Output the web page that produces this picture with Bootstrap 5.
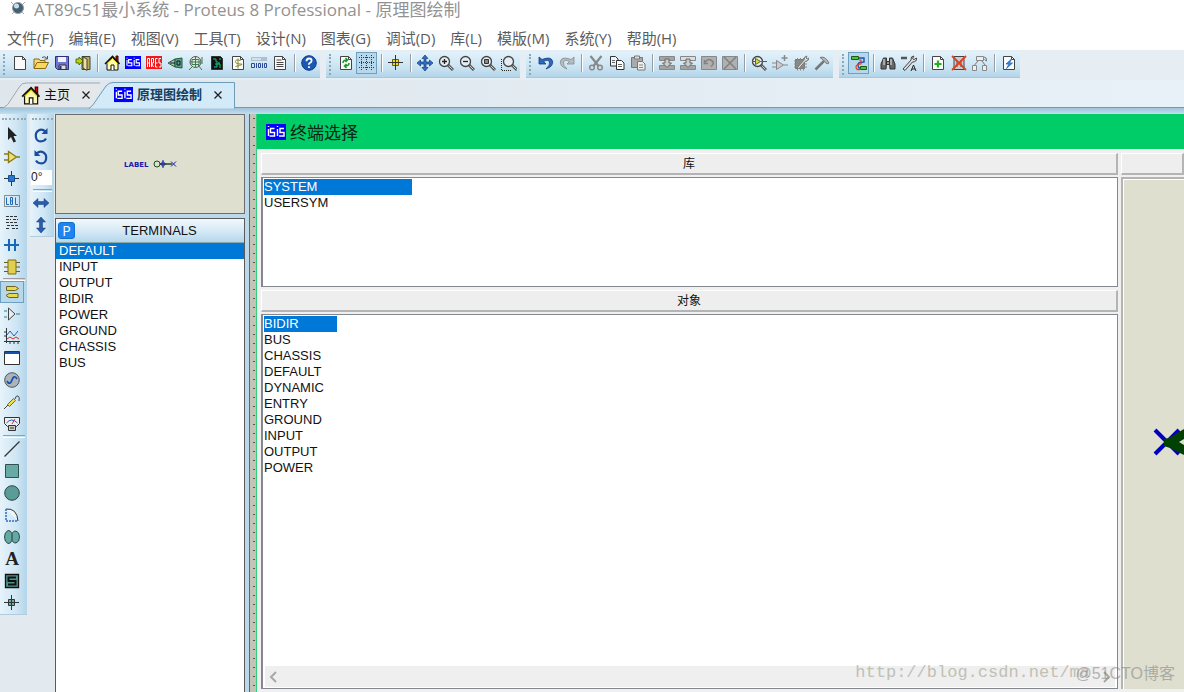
<!DOCTYPE html>
<html lang="zh-CN">
<head>
<meta charset="utf-8">
<meta name="viewport" content="width=device-width, initial-scale=1">
<title>AT89c51最小系统 - Proteus 8 Professional - 原理图绘制</title>
<link href="https://cdn.jsdelivr.net/npm/bootstrap@5.3.0/dist/css/bootstrap.min.css" rel="stylesheet">
<script src="https://cdn.jsdelivr.net/npm/bootstrap@5.3.0/dist/js/bootstrap.bundle.min.js"></script>
<style>
  body { font-family: "Liberation Sans", "Noto Sans CJK SC", sans-serif; font-size: 13px; line-height: 16px; color: #111; background: #e2eaf0; }
  .titlebar { height: 22px; padding: 0 10px; gap: 8px; background: #fff; color: #929292; font: 17px/20px "Open Sans", "Noto Sans CJK SC", sans-serif; }
  .titlebar h1 { font: inherit; margin: 0; }
  .menubar { height: 28px; padding: 2px 7px 0; gap: 15px; background: #fff; font: 15px/28px "Open Sans", "Noto Sans CJK SC", sans-serif; }
  .menubar a { color: #5c5c5c; text-decoration: none; }
  .toolrow { height: 30px; gap: 6px; padding-top: 2px; background: #e6eef4; }
  .toolgroup { height: 26px; padding: 0 1px 0 9px; position: relative; background: linear-gradient(#e2f2fb, #cbe4f3 60%, #b2d5e9); border-bottom: 1px solid #a5c8dc; }
  .toolgroup::before { content: ""; position: absolute; left: 3px; top: 2px; bottom: 2px; border-left: 2px dotted #8fa6b4; }
  button { border: 0; padding: 0; background: none; color: inherit; }
  .tool { width: 21px; height: 22px; display: flex; align-items: center; justify-content: center; flex: none; }
  .tool svg, .glyph { width: 16px; height: 16px; display: block; flex: none; fill: none; stroke: #333; }
  .pressed { background: #b7d7ea; border: 1px solid #6e9fc0; }
  .sep-v { width: 8px; height: 18px; margin-top: 2px; border-left: 1px solid #9a9da0; margin-left: 4px; margin-right: -4px; box-shadow: inset 1px 0 #fff; }
  .sep-h { height: 3px; margin: 0 2px 0 3px; border-top: 1px solid #9a9da0; border-bottom: 1px solid #fff; }
  .letter { font: bold 19px/20px "Liberation Serif", serif; color: #222; }
  .tabrow { height: 28px; background: linear-gradient(90deg, #dfe7ed, #e8f0f8); border-bottom: 1px solid #6d9bb8; }
  .doctab { position: relative; height: 28px; padding-top: 2px; gap: 4px; }
  .doctab > .shape { position: absolute; top: 0; left: 0; height: 28px; z-index: 0; }
  .doctab > span, .doctab > button, .doctab > .glyph { position: relative; z-index: 1; }
  .doctab > .glyph { width: 19px; height: 19px; }
  .tab-home { width: 100px; padding-left: 21px; }
  .tab-doc { width: 135px; padding-left: 14px; color: #15405f; font-weight: 700; }
  .closer { width: 16px; height: 16px; margin-left: 4px; }
  .closer svg { width: 8px; height: 8px; display: block; margin: auto; stroke: #222; stroke-width: 1.3; fill: none; }
  .band { height: 6px; background: linear-gradient(#9fc3d8, #c1dff0); flex: none; }
  .workarea { min-height: 0; background: #e2eaf0; }
  .side { background: linear-gradient(90deg, #e6f3fb, #cfe6f4 60%, #b3d5ea); align-self: flex-start; padding-top: 10px; position: relative; border-bottom: 1px solid #b0cddd; }
  .side::before { content: ""; position: absolute; top: 4px; left: 2px; right: 1px; border-top: 2px dotted #93a9b6; }
  .side-modes .tool { width: 24px; }
  .side-modes { width: 27px; }
  .side-orient { width: 24px; margin-left: 3px; }
  .angle { width: 21px; height: 15px; margin: 2px 0 4px 1px; border: 0; padding: 0; background: #fff; font-size: 12px; line-height: 15px; color: #222; display: block; }
  .selector { width: 190px; margin-left: 1px; background: #bcd9eb; }
  .overview { height: 100px; background: #dfdfd0; border: 1px solid #6d6d6d; margin-bottom: 4px; }
  .picker { border: 1px solid #5a5a5a; border-bottom: 0; background: #fff; }
  .picker-head { height: 24px; background: linear-gradient(#f0f8fd, #d7eaf6 50%, #b5d7ec); border-bottom: 1px solid #8aa; }
  .pbtn { width: 17px; height: 17px; margin-left: 2px; border-radius: 3px; background: #1e84ef; border: 1px solid #1470d0; color: #fff; font: 14px/15px "Open Sans", sans-serif; }
  .items { list-style: none; margin: 0; padding: 0; }
  .items li { height: 16px; white-space: nowrap; cursor: default; }
  .items .picked { background: #0078d7; color: #fff; }
  .picker li { padding-left: 3px; }
  .ruler { width: 12px; background: linear-gradient(90deg, #bcd9eb 4px, #666 4px, #666 5px, #c5c3b5 5px, #c5c3b5 11px, #2fd080 11px); position: relative; }
  .ruler::after { content: ""; position: absolute; right: 2px; top: 4px; bottom: 0; width: 2px; background: repeating-linear-gradient(#555 0 1px, transparent 1px 9px); }
  .dialog-pane { background: #f0f0f0; min-width: 0; }
  .dialog-head { height: 35px; padding-left: 9px; gap: 4px; background: #00cd68; font: 17px/35px "Noto Sans CJK SC", sans-serif; color: #0b2415; flex: none; }
  .dialog-head .glyph { width: 20px; height: 16px; }
  .panes { padding: 4px 0 3px 4px; gap: 3px; min-height: 0; }
  .colhead { height: 22px; background: #eee; border: 1px solid #fff; border-right: 2px solid #b4b4b4; border-bottom: 2px solid #b4b4b4; text-align: center; line-height: 21px; flex: none; font-size: 12px; }
  .listbox { background: #fff; border: 1px solid #828790; border-left-width: 2px; padding-top: 1px; min-height: 0; }
  .listbox .items { padding-left: 1px; }
  .lib-box { height: 110px; margin: 2px 0 3px; flex: none; }
  .obj-box { margin-top: 2px; }
  .lib-box .picked { width: 148px; }
  .obj-box .picked { width: 73px; }
  .hscroll { height: 21px; background: #efefef; padding: 0 3px; margin: 0 2px 1px; }
  .hscroll svg { width: 10px; height: 12px; stroke: #a8a8a8; stroke-width: 2; fill: none; }
  .view-pane { width: 63px; flex: none; overflow: hidden; }
  .canvas-view { background: #dfdfd0; border: 2px solid #b4b4b4; border-right: 0; border-bottom: 0; box-shadow: inset 1px 1px #fff; margin-top: 2px; }
  .canvas-view svg { width: 52px; height: 30px; flex: none; margin-left: 29px; margin-top: 15px; }
  .watermark { position: absolute; right: 9px; bottom: 7px; color: #777; opacity: .5; font: 16px/22px "Liberation Sans", "Noto Sans CJK SC", sans-serif; pointer-events: none; }
  .watermark-url { right: 94px; bottom: 8px; color: #9a9a88; opacity: .55; font: 17px/22px "Liberation Mono", monospace; }
</style>
</head>
<body class="vh-100 d-flex flex-column overflow-hidden position-relative">

<!-- shared glyphs -->
<svg width="0" height="0" class="position-absolute" aria-hidden="true">
  <symbol id="house" viewBox="0 0 16 16"><path d="M12 5V1h2v6z" fill="#c00" stroke="#400"/><path d="M3 8v7h11V8L8.500 2.500z" fill="#fff8b0" stroke="#111"/><path d="M1 9l7.500-7.500L15.500 9" stroke="#111" stroke-width="1.600"/><path d="M3 8.500L8.500 3.500 13.500 8.500" stroke="#e0d000"/><path d="M7 15v-5h3v5" fill="#fff" stroke="#111"/></symbol>
  <symbol id="isis" viewBox="0 0 20 16" preserveAspectRatio="none"><path d="M0 0h20v16H0z" fill="#00f" stroke="none"/><path d="M2.500 2v1M2.500 5v7M8.500 4.500h-4v4h4V12h-5M11.500 2v1M11.500 5v7M18 4.500h-4v4h4V12h-5" stroke="#fff" stroke-width="1.400"/></symbol>
  <symbol id="page" viewBox="0 0 16 16"><path d="M2.500 1.500h8l3 3v10h-11z" fill="#fafafa" stroke="#444"/><path d="M10.500 1.500v3h3" stroke="#444"/></symbol>
  <symbol id="lens" viewBox="0 0 16 16"><path d="M10 10l5 5" stroke="#555" stroke-width="3"/><path d="M10.500 10.500l4 4" stroke="#ccc" stroke-width="1"/><circle cx="6.500" cy="6.500" r="5" fill="#e4edf2" stroke="#444" stroke-width="1.300"/></symbol>
  <symbol id="cross" viewBox="0 0 8 8"><path d="M.5.5l7 7M7.500.5l-7 7"/></symbol>
</svg>

<header>
  <div class="titlebar d-flex">
    <svg class="glyph" viewBox="0 0 16 16"><path d="M1 2l3 3M15 2l-3 3M2 14l2-2M14 14l-2-2" stroke="#aaa"/><circle cx="8" cy="8" r="5.500" fill="#456074" stroke="#8ea0ad"/><circle cx="6.500" cy="6" r="2.500" fill="#c9dce8" stroke="none"/></svg>
    <h1>AT89c51最小系统 - Proteus 8 Professional - 原理图绘制</h1>
  </div>
  <nav class="menubar d-flex" aria-label="主菜单">
    <a href="#">文件(F)</a><a href="#">编辑(E)</a><a href="#">视图(V)</a><a href="#">工具(T)</a><a href="#">设计(N)</a><a href="#">图表(G)</a><a href="#">调试(D)</a><a href="#">库(L)</a><a href="#">模版(M)</a><a href="#">系统(Y)</a><a href="#">帮助(H)</a>
  </nav>
  <div class="toolrow d-flex">
    <div class="toolgroup d-flex" role="toolbar" aria-label="文件">
      <button class="tool" aria-label="新建"><svg><use href="#page"/></svg></button>
      <button class="tool" aria-label="打开"><svg viewBox="0 0 16 16"><path d="M1 13V4h5l1 1.500h5V8" fill="#f6dc78" stroke="#8a6a10"/><path d="M1 13.500L4 7.500h11.500l-3 6z" fill="#f8d860" stroke="#8a6a10"/><path d="M9 2.500q3-2 5 1M14.500 1v3h-3" stroke="#555"/></svg></button>
      <button class="tool" aria-label="保存"><svg viewBox="0 0 16 16"><path d="M1.500 1.500h13v13h-11l-2-2z" fill="#7076cf" stroke="#2c3078"/><path d="M4 2h8v5H4z" fill="#f2f2fb" stroke="none"/><path d="M5 10h7v4.500H5z" fill="#ddd" stroke="#333"/><path d="M6.500 11v3" stroke="#2c3078" stroke-width="2"/></svg></button>
      <button class="tool" aria-label="关闭工程"><svg viewBox="0 0 16 16"><path d="M7 1.500h8v13H7z" fill="#bba95a" stroke="#443"/><path d="M8 2l4 2v11.500l-4-2.500z" fill="#eee2a0" stroke="#443"/><path d="M1 4h3V2l4 4-4 4V8H1z" fill="#b7d600" stroke="#3f5800" stroke-width=".8"/></svg></button>
      <span class="sep-v"></span>
      <button class="tool" aria-label="主页"><svg><use href="#house"/></svg></button>
      <button class="tool" aria-label="ISIS"><svg viewBox="0 0 16 16"><use href="#isis" y="1" width="16" height="13"/></svg></button>
      <button class="tool" aria-label="ARES"><svg viewBox="0 0 16 16"><path d="M0 1h16v13H0z" fill="#f01818" stroke="none"/><path d="M1.500 12V3.500h2V12M1.500 8h2M5.500 12V3.500h2V8h-2l2 4M11.500 3.500h-2V12h2M9.500 8h2M15 3.500h-2V8h2v4h-2" stroke="#fff"/></svg></button>
      <button class="tool" aria-label="三维"><svg viewBox="0 0 16 16"><path d="M1 8l7-4v8z" fill="#a9cfa2" stroke="#2c5c38"/><path d="M8 4l7-1v10l-7-1z" fill="#5fa37c" stroke="#1d5c40"/><path d="M3 8h5M10 6h3v4h-3z" stroke="#114"/></svg></button>
      <button class="tool" aria-label="Gerber"><svg viewBox="0 0 16 16"><circle cx="7.500" cy="7" r="5.500" fill="#dce9df" stroke="#555"/><path d="M2 7h11M7.500 1v11M4 4.500h7v5H4zM1 15l4-4M10 10l4 5M14 2v7" stroke="#3f7a55"/></svg></button>
      <button class="tool" aria-label="设计浏览"><svg viewBox="0 0 16 16"><path d="M2.500 1.500h9l2 2v11h-11z" fill="#111" stroke="#333"/><path d="M4 4h3v3M8 6v6M6 9h5v4M10 4h2" stroke="#0fd060"/><path d="M5 12h3M10 7v2" stroke="#00c8ff"/></svg></button>
      <button class="tool" aria-label="材料清单"><svg viewBox="0 0 16 16"><use href="#page"/><path d="M10.500 5.500q-5-1.500-5 1t5 2.500-5 2.500M8 3.500v10" stroke="#86862a"/></svg></button>
      <button class="tool" aria-label="源代码"><svg viewBox="0 0 16 16"><path d="M0 4h16" stroke="#aebfd2" stroke-width="4"/><path d="M1 4h9" stroke="#fff"/><path d="M.5 8.500h3v4h-3zM5.500 8v5M7.500 8.500h2v4h-2zM11.500 8v5M13.500 8.500h2v4h-2z" stroke="#2c4a9a"/></svg></button>
      <button class="tool" aria-label="工程备注"><svg viewBox="0 0 16 16"><use href="#page"/><path d="M4.500 5h5M4.500 7.500h7M4.500 9.500h7M4.500 11.500h7" stroke="#444"/></svg></button>
      <span class="sep-v"></span>
      <button class="tool" aria-label="帮助"><svg viewBox="0 0 16 16"><circle cx="8" cy="8" r="7.300" fill="#1b58b5" stroke="#123a80"/><path d="M5.500 6.200q0-2.700 2.600-2.700t2.500 2.200q0 1.300-1.500 2T8 9.800M8 11.300v1.700" stroke="#fff" stroke-width="1.800"/></svg></button>
    </div>
    <div class="toolgroup d-flex" role="toolbar" aria-label="视图">
      <button class="tool" aria-label="刷新"><svg viewBox="0 0 16 16"><use href="#page"/><path d="M5 8q0-3 4-3M7.500 3l2 2-2 2M11 8q0 3-4 3M8.500 13l-2-2 2-2" stroke="#159a25" stroke-width="1.500"/></svg></button>
      <button class="tool pressed" aria-label="网格"><svg viewBox="0 0 16 16"><path d="M2.500 0v16M7.500 0v16M12.500 0v16M0 2.500h16M0 7.500h16M0 12.500h16" stroke="#2c3a44" stroke-dasharray="1 1"/></svg></button>
      <span class="sep-v"></span>
      <button class="tool" aria-label="原点"><svg viewBox="0 0 16 16"><path d="M4.500 4.500h6v6h-6z" fill="#f0dc20" stroke="#6a5c00"/><path d="M7.500 0v15M0 7.500h15" stroke="#333"/></svg></button>
      <span class="sep-v"></span>
      <button class="tool" aria-label="居中"><svg viewBox="0 0 16 16"><path d="M8 0l3 3.500H9V7h3.500V5L16 8l-3.500 3V9H9v3.500h2L8 16l-3-3.500h2V9H3.500v2L0 8l3.500-3v2H7V3.500H5z" fill="#2e70c8" stroke="#173c78" stroke-width=".7"/></svg></button>
      <button class="tool" aria-label="放大"><svg viewBox="0 0 16 16"><use href="#lens"/><path d="M4 6.500h5M6.500 4v5" stroke="#222" stroke-width="1.300"/></svg></button>
      <button class="tool" aria-label="缩小"><svg viewBox="0 0 16 16"><use href="#lens"/><path d="M4 6.500h5" stroke="#222" stroke-width="1.300"/></svg></button>
      <button class="tool" aria-label="全图"><svg viewBox="0 0 16 16"><use href="#lens"/><path d="M4.500 4.500h4v4h-4z" fill="#888" stroke="#333"/></svg></button>
      <button class="tool" aria-label="区域"><svg viewBox="0 0 16 16"><path d="M.5 4v11.500H10" stroke="#222" stroke-dasharray="1 1"/><use href="#lens" x="1"/></svg></button>
    </div>
    <div class="toolgroup d-flex" role="toolbar" aria-label="编辑">
      <button class="tool" aria-label="撤销"><svg viewBox="0 0 16 16"><path d="M1 2v7h7L5.500 6.500q5-2.500 6 .5t-3.500 7q8-3 6.500-8T4 4.500z" fill="#2c68c0" stroke="#173c78" stroke-width=".8"/></svg></button>
      <button class="tool" aria-label="重做"><svg viewBox="0 0 16 16"><path d="M15 2v7H8l2.500-2.500q-5-2.500-6 .5T8 14Q0 11 1.500 6T12 4.500z" fill="#b4bcc2" stroke="#858c90" stroke-width=".8"/></svg></button>
      <span class="sep-v"></span>
      <button class="tool" aria-label="剪切"><svg viewBox="0 0 16 16"><path d="M2.500 1l8 10M13.500 1l-8 10" stroke="#888" stroke-width="2.200"/><circle cx="4" cy="12.500" r="2.300" stroke="#888" stroke-width="1.500"/><circle cx="12" cy="12.500" r="2.300" stroke="#888" stroke-width="1.500"/></svg></button>
      <button class="tool" aria-label="复制"><svg viewBox="0 0 16 16"><path d="M1.500 1.500h5l2.500 2.500v7H1.500z" fill="#f4f4f4" stroke="#333"/><path d="M7.500 5.500h5L15 8v6.500H7.500z" fill="#fff" stroke="#333"/><path d="M3 5.500h3M3 7.500h3M9 9.500h4M9 11.500h4" stroke="#666"/></svg></button>
      <button class="tool" aria-label="粘贴"><svg viewBox="0 0 16 16"><path d="M1.500 2.500h11v10h-11z" fill="#aaa" stroke="#777"/><path d="M4.500 1h5v3h-5z" fill="#ddd" stroke="#777"/><path d="M7.500 6.500h5L15 9v6H7.500z" fill="#eee" stroke="#777"/><path d="M9 10h4M9 12.500h4" stroke="#888"/></svg></button>
      <span class="sep-v"></span>
      <button class="tool" aria-label="块复制"><svg viewBox="0 0 16 16"><path d="M.5 1.500h15v4H.5zM.5 10.500h15v4H.5z" fill="#a4a4a4" stroke="#888"/><path d="M6 4h4v4h2.500L8 12.500 3.500 8H6z" fill="#ccc" stroke="#666"/></svg></button>
      <button class="tool" aria-label="块移动"><svg viewBox="0 0 16 16"><path d="M.5 1.500h15v4H.5z" fill="#ddd" stroke="#888"/><path d="M.5 10.500h15v4H.5z" fill="#a4a4a4" stroke="#888"/><path d="M6 4h4v4h2.500L8 12.500 3.500 8H6z" fill="#ccc" stroke="#666"/></svg></button>
      <button class="tool" aria-label="块旋转"><svg viewBox="0 0 16 16"><path d="M.5 1.500h15v13H.5z" fill="#b0b0b0" stroke="#888"/><path d="M4.500 7q2-4 6-1.500t-.5 6M3.500 5v3.500H7" stroke="#808080" stroke-width="1.500"/></svg></button>
      <button class="tool" aria-label="块删除"><svg viewBox="0 0 16 16"><path d="M.5 1.500h15v13H.5z" fill="#b0b0b0" stroke="#888"/><path d="M2 2l12 12M14 2L2 14" stroke="#808080" stroke-width="1.500"/></svg></button>
      <span class="sep-v"></span>
      <button class="tool" aria-label="拾取元件"><svg viewBox="0 0 16 16"><use href="#lens"/><path d="M4.500 3.500v6l5-3zM1 6.500h3.500M9.500 6.500H16" fill="#d8dc40" stroke="#5c6a18"/></svg></button>
      <button class="tool" aria-label="制作元件"><svg viewBox="0 0 16 16"><path d="M4.500 5.500v9l7-4.500zM0 8h4.500M0 12h4.500M11.500 10H16" fill="#ccc" stroke="#888"/><path d="M12.500 0v6M9.500 3h6" stroke="#888" stroke-width="1.500"/></svg></button>
      <button class="tool" aria-label="封装工具"><svg viewBox="0 0 16 16"><path d="M2.500 4.500h9v9h-9z" fill="#888" stroke="#777"/><path d="M1 6h13M1 9h13M1 12h13M4.500 3v12.500M7.500 3v12.500M10.500 3v12.500" stroke="#888"/><path d="M4 13l7-8q0-4 3-4l-1 2 1 1 2-1q0 3-4 3.500l-6 7z" fill="#e2e2e2" stroke="#777"/></svg></button>
      <button class="tool" aria-label="分解"><svg viewBox="0 0 16 16"><path d="M1.500 14.500L10 6" stroke="#777" stroke-width="2.500"/><path d="M6 2.500q5-2 9 5.500l-2 1-3.500-4z" fill="#bbb" stroke="#777"/></svg></button>
    </div>
    <div class="toolgroup d-flex" role="toolbar" aria-label="设计工具">
      <button class="tool pressed" aria-label="自动连线"><svg viewBox="0 0 16 16"><path d="M8 3h5v4q-6 0-6 2.500T8 13h3" stroke="#1e50b8" stroke-width="1.400"/><path d="M8 5h2v4q-5 0-5 3t4 2.500" stroke="#e03c20" stroke-width="1.200"/><path d="M.5 1.500h7v3h-7zM9.500 11.500h6v3h-6z" fill="#4cc43c" stroke="#1c5c18"/></svg></button>
      <span class="sep-v"></span>
      <button class="tool" aria-label="查找"><svg viewBox="0 0 16 16"><path d="M3.500 3h3v5.500L6 14H1V9zM12.500 3h-3v5.500l.5 5.500h5V9z" fill="#666" stroke="#333"/><path d="M6.500 6.500h3v3h-3z" fill="#999" stroke="#333"/><path d="M4 4v6M11 4v6" stroke="#eee"/></svg></button>
      <button class="tool" aria-label="属性分配"><svg viewBox="0 0 16 16"><path d="M0 3h6" stroke="#555" stroke-width="2.500"/><path d="M2 14l8-9q-.5-4 3-4l-1.500 2.500 1.500 1L15.500 3q.5 4-4 4l-7.500 8.500z" fill="#ddd" stroke="#444"/><path d="M10 16l2.500-6 2.500 6M11 14h3" stroke="#222"/></svg></button>
      <span class="sep-v"></span>
      <button class="tool" aria-label="新图纸"><svg viewBox="0 0 16 16"><use href="#page"/><path d="M8 5.500v7M4.500 9h7" stroke="#20b020" stroke-width="2.200"/></svg></button>
      <button class="tool" aria-label="删除图纸"><svg viewBox="0 0 16 16"><path d="M3 1.500h10v13H3z" fill="#ccc" stroke="#444"/><path d="M6 5v7M10 5v7" stroke="#555"/><path d="M1 1l14 14M15 1L1 15" stroke="#e04020" stroke-width="1.800"/></svg></button>
      <button class="tool" aria-label="退出子图"><svg viewBox="0 0 16 16"><path d="M4.500 1.500h7v4h-7zM.5 10.500h4v5h-4zM10.500 10.500h4v5h-4z" fill="#eee" stroke="#888"/><path d="M6 6l-3.500 4M10 6l3 4M12 2q3 0 2.500 4l-2-1.500" stroke="#777"/></svg></button>
      <span class="sep-v"></span>
      <button class="tool" aria-label="电气检查"><svg viewBox="0 0 16 16"><use href="#page"/><path d="M10.500 4L5 9h3l-2.500 4.500L11.500 8h-3z" fill="#2f8ce8" stroke="#1c5cb8" stroke-width=".7"/></svg></button>
    </div>
  </div>
  <div class="tabrow d-flex">
    <div class="doctab tab-home d-flex align-items-center">
      <svg class="shape" width="100" viewBox="0 0 100 28" aria-hidden="true"><path d="M3 28Q8 26 12 18L20 6Q22 3 26 3H101V28z" fill="#e5e8ea" stroke="#9aa9b3"/></svg>
      <svg class="glyph"><use href="#house"/></svg><span>主页</span>
      <button class="closer" aria-label="关闭主页"><svg><use href="#cross"/></svg></button>
    </div>
    <div class="doctab tab-doc d-flex align-items-center">
      <svg class="shape" width="135" viewBox="0 0 135 28" overflow="visible" aria-hidden="true"><path d="M-11 28.500Q-7 26-3 19L6 6Q9 2.500 13 2.500H134.500V28.500" fill="#d3eaf8" stroke="#6d9bb8"/></svg>
      <svg class="glyph" viewBox="0 0 20 20"><use href="#isis" y="1" width="20" height="16"/></svg><span>原理图绘制</span>
      <button class="closer" aria-label="关闭原理图绘制"><svg><use href="#cross"/></svg></button>
    </div>
  </div>
</header>
<div class="band"></div>

<main class="workarea d-flex flex-grow-1">
  <div class="side side-modes" role="toolbar" aria-label="模式">
    <button class="tool" aria-label="选择"><svg viewBox="0 0 16 16"><path d="M4 0v13l3-3 2.500 5.500 2.500-1L9.500 9H13z" fill="#222" stroke="none"/></svg></button>
    <button class="tool" aria-label="元件"><svg viewBox="0 0 16 16"><path d="M4.500 2.500v11l8-5.500zM0 5h4M0 11h4M12 8h4" fill="#efe070" stroke="#8a7a18" stroke-width="1.300"/></svg></button>
    <button class="tool" aria-label="节点"><svg viewBox="0 0 16 16"><path d="M7.500 0v15M0 7.500h15" stroke="#333"/><path d="M4.500 4.500h6v6h-6z" fill="#2478d0" stroke="#17508a"/></svg></button>
    <button class="tool" aria-label="连线标号"><svg viewBox="0 0 16 16"><path d="M.5 2.500h15v11H.5z" stroke="#333" stroke-dasharray="1 1"/><path d="M2.500 4.500v7H5M6.500 4.500h2v7h-2zM6.500 8h2M11.500 4.500v7H14" stroke="#2068b8"/></svg></button>
    <button class="tool" aria-label="文字脚本"><svg viewBox="0 0 16 16"><path d="M2 1.500h12M2 4.500h5M9 4.500h5M2 7.500h12M3 10.500h12M2 13.500h4M8 13.500h6" stroke="#333" stroke-dasharray="3 1"/></svg></button>
    <button class="tool" aria-label="总线"><svg viewBox="0 0 16 16"><path d="M0 8h15M5 2v12M11 2v12" stroke="#1868b8" stroke-width="2"/></svg></button>
    <button class="tool" aria-label="子电路"><svg viewBox="0 0 16 16"><path d="M0 3.500h16M0 8h16M0 12.500h16" stroke="#665c20"/><path d="M4 1h8v14H4z" fill="#e2d04c" stroke="#7c6c18"/></svg></button>
    <div class="sep-h"></div>
    <button class="tool pressed" aria-label="终端"><svg viewBox="0 0 16 16"><path d="M2.500 2.500h9l3 2-3 2h-9zM14 9.500H5l-3 2 3 2h9z" fill="#e8da50" stroke="#6e6420"/></svg></button>
    <button class="tool" aria-label="引脚"><svg viewBox="0 0 16 16"><path d="M4.500 2v12L11 8z" fill="#e6eef4" stroke="#444"/><path d="M0 5h3M0 11h3M12 8h4" stroke="#2a8080"/></svg></button>
    <button class="tool" aria-label="图表"><svg viewBox="0 0 16 16"><path d="M2.500 0v15M0 13.500h16M0 4h3M0 8h3M6 13v3M10 13v3M14 13v3" stroke="#333"/><path d="M3 7l3-4 4 5 4-5" stroke="#1c60c0"/><path d="M3 11l3-2 3 2 3-2 3 2" stroke="#d03020"/></svg></button>
    <button class="tool" aria-label="活动弹出"><svg viewBox="0 0 16 16"><path d="M.5 1.500h15v13H.5z" fill="#fff" stroke="#333"/><path d="M1 3h14" stroke="#1850b0" stroke-width="2"/></svg></button>
    <button class="tool" aria-label="激励源"><svg viewBox="0 0 16 16"><circle cx="8" cy="8" r="7.300" fill="#a9b4bc" stroke="#555"/><path d="M3 9C5 13 7 11 8 8S11 3 13 7" stroke="#1850b0" stroke-width="1.700"/></svg></button>
    <button class="tool" aria-label="探针"><svg viewBox="0 0 16 16"><path d="M0 15l4-4M11 5q1-4 3-3t1 5" stroke="#444"/><path d="M3.500 10.500l6-6 2 2-6 6z" fill="#efdd50" stroke="#786c20"/></svg></button>
    <button class="tool" aria-label="仪表"><svg viewBox="0 0 16 16"><path d="M.5 1.500h15v6l-3 3h-9l-3-3z" fill="#eee" stroke="#333"/><path d="M2.500 7q5-6 11 0" stroke="#1c60c0"/><path d="M8 8l3-5" stroke="#d33"/><path d="M4.500 9.500h7v5h-7z" fill="#ccc" stroke="#333"/><path d="M6 12h4" stroke="#333"/></svg></button>
    <div class="sep-h"></div>
    <button class="tool" aria-label="直线"><svg viewBox="0 0 16 16"><path d="M.5 15.500l15-15" stroke-width="1.300"/></svg></button>
    <button class="tool" aria-label="方框"><svg viewBox="0 0 16 16"><path d="M1.500 1.500h13v13h-13z" fill="#68aaa6" stroke="#2f5250"/></svg></button>
    <button class="tool" aria-label="圆"><svg viewBox="0 0 16 16"><circle cx="8" cy="8" r="7.300" fill="#5a9c98" stroke="#2f4644"/></svg></button>
    <button class="tool" aria-label="弧"><svg viewBox="0 0 16 16"><path d="M2 2v12h12" stroke="#2a6cc0" stroke-width="1.500" stroke-dasharray="2 1"/><path d="M2 2q11-1 12 12" fill="#edf6fa" stroke="#333"/></svg></button>
    <button class="tool" aria-label="路径"><svg viewBox="0 0 16 16"><path d="M8 4.500Q6.500 1 4 1.500.5 3 .5 8T4 14.500Q6.500 15 8 11.500q1.500 3 4 2.500 3.500-1 3.500-6T12 2Q9.500 1.500 8 4.500z" fill="#62aaa4" stroke="#2f4c4a"/><path d="M8 4.500v7"/></svg></button>
    <button class="tool" aria-label="文字"><span class="letter">A</span></button>
    <button class="tool" aria-label="符号"><svg viewBox="0 0 16 16"><path d="M1.500 1.500h13v13h-13z" fill="#4e958c" stroke="#111" stroke-width="1.300"/><path d="M12 4.500H4.500v3.500h7v3.500H4" stroke="#111" stroke-width="2"/></svg></button>
    <button class="tool" aria-label="标记"><svg viewBox="0 0 16 16"><path d="M4.500 4.500h6v6h-6z" fill="#6cb0a8" stroke="#333"/><path d="M7.500 0v15M0 7.500h15"/></svg></button>
  </div>

  <div class="side side-orient" role="toolbar" aria-label="方向">
    <button class="tool" aria-label="顺时针"><svg viewBox="0 0 16 16"><path d="M12.500 4.500Q9 1.500 5.500 3.500T3 10.500t7 3.500q2-.5 3-2.500" stroke="#1c4c9c" stroke-width="2.200"/><path d="M14.500 1v6H8.500z" fill="#1c4c9c" stroke="none"/></svg></button>
    <button class="tool" aria-label="逆时针"><svg viewBox="0 0 16 16"><path d="M3.500 4.500Q7 1.500 10.500 3.500T13 10.500 6 14q-2-.5-3-2.500" stroke="#1c4c9c" stroke-width="2.200"/><path d="M1.500 1v6h6z" fill="#1c4c9c" stroke="none"/></svg></button>
    <input class="angle" type="text" value="0°" aria-label="角度">
    <div class="sep-h"></div>
    <button class="tool" aria-label="水平镜像"><svg viewBox="0 0 16 16"><path d="M0 8l5-4.500v3h6v-3L16 8l-5 4.500v-3H5v3z" fill="#2c5cac" stroke="#173c78" stroke-width=".5"/></svg></button>
    <button class="tool" aria-label="垂直镜像"><svg viewBox="0 0 16 16"><path d="M8 0L3.500 5h3v6h-3L8 16l4.500-5h-3V5h3z" fill="#2c5cac" stroke="#173c78" stroke-width=".5"/></svg></button>
  </div>

  <section class="selector d-flex flex-column" aria-label="对象选择器">
    <div class="overview d-flex align-items-center justify-content-center">
      <svg width="54" height="12" viewBox="0 0 54 12" fill="none" aria-label="LABEL">
        <text x="1" y="9" font-family="DejaVu Sans, sans-serif" font-size="7" font-weight="700" fill="#1818b0">LABEL</text>
        <circle cx="34" cy="6" r="3" stroke="#164c16"/><path d="M37 6h12" stroke="#164c16" stroke-width="1.500"/><path d="M40 2v8M37.500 6L40 3.500 42.500 6 40 8.500zM48 3.500l5 5M53 3.500l-5 5" stroke="#1818b0"/>
      </svg>
    </div>
    <div class="picker flex-grow-1">
      <div class="picker-head d-flex align-items-center">
        <button class="pbtn d-flex justify-content-center" aria-label="拾取">P</button>
        <span class="flex-grow-1 text-center">TERMINALS</span>
      </div>
      <ul class="items">
        <li class="picked">DEFAULT</li><li>INPUT</li><li>OUTPUT</li><li>BIDIR</li><li>POWER</li><li>GROUND</li><li>CHASSIS</li><li>BUS</li>
      </ul>
    </div>
  </section>
  <div class="ruler"></div>

  <section class="dialog-pane d-flex flex-column flex-grow-1" aria-label="终端选择">
    <div class="dialog-head d-flex align-items-center">
      <svg class="glyph"><use href="#isis"/></svg><span>终端选择</span>
    </div>
    <div class="panes d-flex flex-grow-1">
      <div class="d-flex flex-column flex-grow-1">
        <div class="colhead">库</div>
        <div class="listbox lib-box">
          <ul class="items"><li class="picked">SYSTEM</li><li>USERSYM</li></ul>
        </div>
        <div class="colhead">对象</div>
        <div class="listbox obj-box d-flex flex-column flex-grow-1">
          <ul class="items flex-grow-1">
            <li class="picked">BIDIR</li><li>BUS</li><li>CHASSIS</li><li>DEFAULT</li><li>DYNAMIC</li><li>ENTRY</li><li>GROUND</li><li>INPUT</li><li>OUTPUT</li><li>POWER</li>
          </ul>
          <div class="hscroll d-flex justify-content-between align-items-center">
            <svg viewBox="0 0 10 12"><path d="M8 1L3 6l5 5"/></svg>
            <svg viewBox="0 0 10 12"><path d="M2 1l5 5-5 5"/></svg>
          </div>
        </div>
      </div>
      <div class="view-pane d-flex flex-column">
        <div class="colhead"></div>
        <div class="canvas-view d-flex align-items-center flex-grow-1">
          <svg viewBox="0 0 52 30" fill="none"><path d="M3 3l24 24M27 3L3 27" stroke="#0000c0" stroke-width="4"/><path d="M12 12l5-1 15-9v26l-14-7-6-2z" fill="#004000"/><path d="M27 15l5-3v6z" fill="#dfdfd0"/></svg>
        </div>
      </div>
    </div>
  </section>
</main>

<div class="watermark watermark-url">http://blog.csdn.net/ma</div>
<div class="watermark">@51CTO博客</div>
</body>
</html>
